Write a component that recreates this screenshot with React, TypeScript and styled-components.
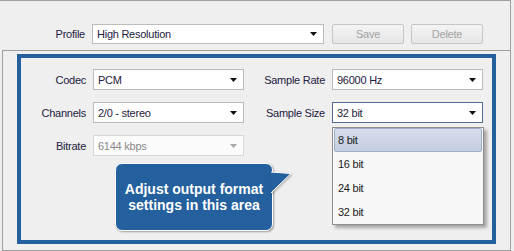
import styled, { createGlobalStyle, css } from 'styled-components'

const colors = {
  bg: '#efefef',
  line: '#a0a0a0',
  blue: '#23609d',
  text: '#1e2040',
  comboBorder: '#bcbcbc',
  focus: '#536c93',
  disabledText: '#8a8a8a',
}

const GlobalStyle = createGlobalStyle`
  html, body {
    margin: 0;
    padding: 0;
    background: ${colors.bg};
  }
  body {
    font-family: 'Liberation Sans', Arial, sans-serif;
    font-size: 11px;
    letter-spacing: -0.25px;
    color: ${colors.text};
  }
`

const Screen = styled.div`
  width: 514px;
  height: 251px;
  background: ${colors.bg};
  overflow: hidden;
`

const TopBar = styled.div`
  box-sizing: border-box;
  width: 511px;
  height: 50px;
  padding-top: 16px;
  border-top: 1px solid ${colors.line};
  border-right: 1px solid ${colors.line};
  display: flex;
  align-items: center;
`

const ProfileLabel = styled.span`
  width: 85px;
  margin-right: 7px;
  text-align: right;
`

const Button = styled.button`
  box-sizing: border-box;
  width: 72px;
  height: 20px;
  margin-left: ${(p) => p.$gap}px;
  padding: 0;
  font-family: inherit;
  font-size: 11px;
  letter-spacing: -0.25px;
  color: #a3a3a3;
  background: linear-gradient(#f4f4f4, #e6e6e6);
  border: 1px solid #c6c6c6;
  border-radius: 2px;
`

const GroupBox = styled.div`
  box-sizing: border-box;
  width: 509px;
  height: 201px;
  margin-left: 2px;
  border: 1px solid ${colors.line};
`

const BlueFrame = styled.div`
  position: relative;
  box-sizing: border-box;
  height: 190px;
  margin: 3px 14px 0 14px;
  border: 4px solid ${colors.blue};
`

const FieldGrid = styled.div`
  display: grid;
  grid-template-columns: 65px 151px 74px 151px;
  grid-auto-rows: 21px;
  column-gap: 7px;
  row-gap: 12px;
  padding-top: 11px;
  align-items: center;
`

const FieldLabel = styled.span`
  text-align: right;
  white-space: nowrap;
`

const ComboBox = styled.div`
  box-sizing: border-box;
  width: ${(p) => (p.$width ? `${p.$width}px` : '100%')};
  height: ${(p) => p.$height || 21}px;
  display: flex;
  align-items: center;
  justify-content: space-between;
  padding: 0 6px 0 4px;
  background: #ffffff;
  border: 1px solid ${colors.comboBorder};
  white-space: nowrap;
  ${(p) =>
    p.$focused &&
    css`
      border-color: ${colors.focus};
    `}
  ${(p) =>
    p.$disabled &&
    css`
      background: #fbfbfb;
      border-color: #d6d6d6;
      color: ${colors.disabledText};
    `}
`

const Arrow = ({ muted }: { muted?: boolean }) => (
  <svg width="7" height="4" viewBox="0 0 7 4">
    <polygon points="0,0 7,0 3.5,4" fill={muted ? '#a8a8a8' : '#111'} />
  </svg>
)

const Combo = (props: {
  value: string
  width?: number
  height?: number
  focused?: boolean
  disabled?: boolean
}) => (
  <ComboBox
    $width={props.width}
    $height={props.height}
    $focused={props.focused}
    $disabled={props.disabled}
  >
    <span>{props.value}</span>
    <Arrow muted={props.disabled} />
  </ComboBox>
)

const DropAnchor = styled.div`
  position: relative;
  height: 21px;
`

const DropList = styled.div`
  position: absolute;
  z-index: 2;
  top: calc(100% + 4px);
  left: 0;
  box-sizing: border-box;
  width: 152px;
  padding: 0 1px;
  background: #f7f7f7;
  border: 1px solid #8e8e8e;
  box-shadow: 3px 3px 3px rgba(0, 0, 0, 0.3);
`

const DropItem = styled.div`
  box-sizing: border-box;
  height: 24px;
  display: flex;
  align-items: center;
  padding-left: 4px;
  color: #1a1a1a;
  ${(p) =>
    p.$active &&
    css`
      padding-left: 3px;
      background: linear-gradient(#d6deea, #c2cddf);
      border: 1px solid #9eaec6;
      border-radius: 2px;
    `}
`

const Callout = styled.div`
  position: absolute;
  left: 94px;
  top: 105px;
  box-sizing: border-box;
  width: 158px;
  height: 68px;
  display: flex;
  align-items: center;
  justify-content: center;
  text-align: center;
  background: ${colors.blue};
  border: 1px solid #ffffff;
  border-radius: 7px;
  box-shadow: 1px 1px 2px rgba(0, 0, 0, 0.35);
  color: #ffffff;
  font-weight: bold;
  font-size: 14px;
  letter-spacing: 0;
  line-height: 16px;
`

const Tail = styled.svg`
  position: absolute;
  left: calc(100% - 2px);
  top: 6px;
  overflow: visible;
  filter: drop-shadow(1px 1px 1px rgba(0, 0, 0, 0.3));
`

const sizes = ['8 bit', '16 bit', '24 bit', '32 bit']

export default function App() {
  return (
    <Screen>
      <GlobalStyle />
      <TopBar>
        <ProfileLabel>Profile</ProfileLabel>
        <Combo value="High Resolution" width={232} height={20} />
        <Button $gap={8} disabled>
          Save
        </Button>
        <Button $gap={7} disabled>
          Delete
        </Button>
      </TopBar>
      <GroupBox>
        <BlueFrame>
          <FieldGrid>
            <FieldLabel>Codec</FieldLabel>
            <Combo value="PCM" />
            <FieldLabel>Sample Rate</FieldLabel>
            <Combo value="96000 Hz" />

            <FieldLabel>Channels</FieldLabel>
            <Combo value="2/0 - stereo" />
            <FieldLabel>Sample Size</FieldLabel>
            <DropAnchor>
              <Combo value="32 bit" focused />
              <DropList>
                {sizes.map((s, i) => (
                  <DropItem key={s} $active={i === 0}>
                    {s}
                  </DropItem>
                ))}
              </DropList>
            </DropAnchor>

            <FieldLabel>Bitrate</FieldLabel>
            <Combo value="6144 kbps" disabled />
          </FieldGrid>
          <Callout>
            Adjust output format
            <br />
            settings in this area
            <Tail width="22" height="24" viewBox="0 0 22 24">
              <polygon points="0,2 21,3.5 0,23" fill={colors.blue} />
              <polyline
                points="1,2 21,3.5 1,23"
                fill="none"
                stroke="#ffffff"
                strokeWidth="1"
              />
            </Tail>
          </Callout>
        </BlueFrame>
      </GroupBox>
    </Screen>
  )
}
